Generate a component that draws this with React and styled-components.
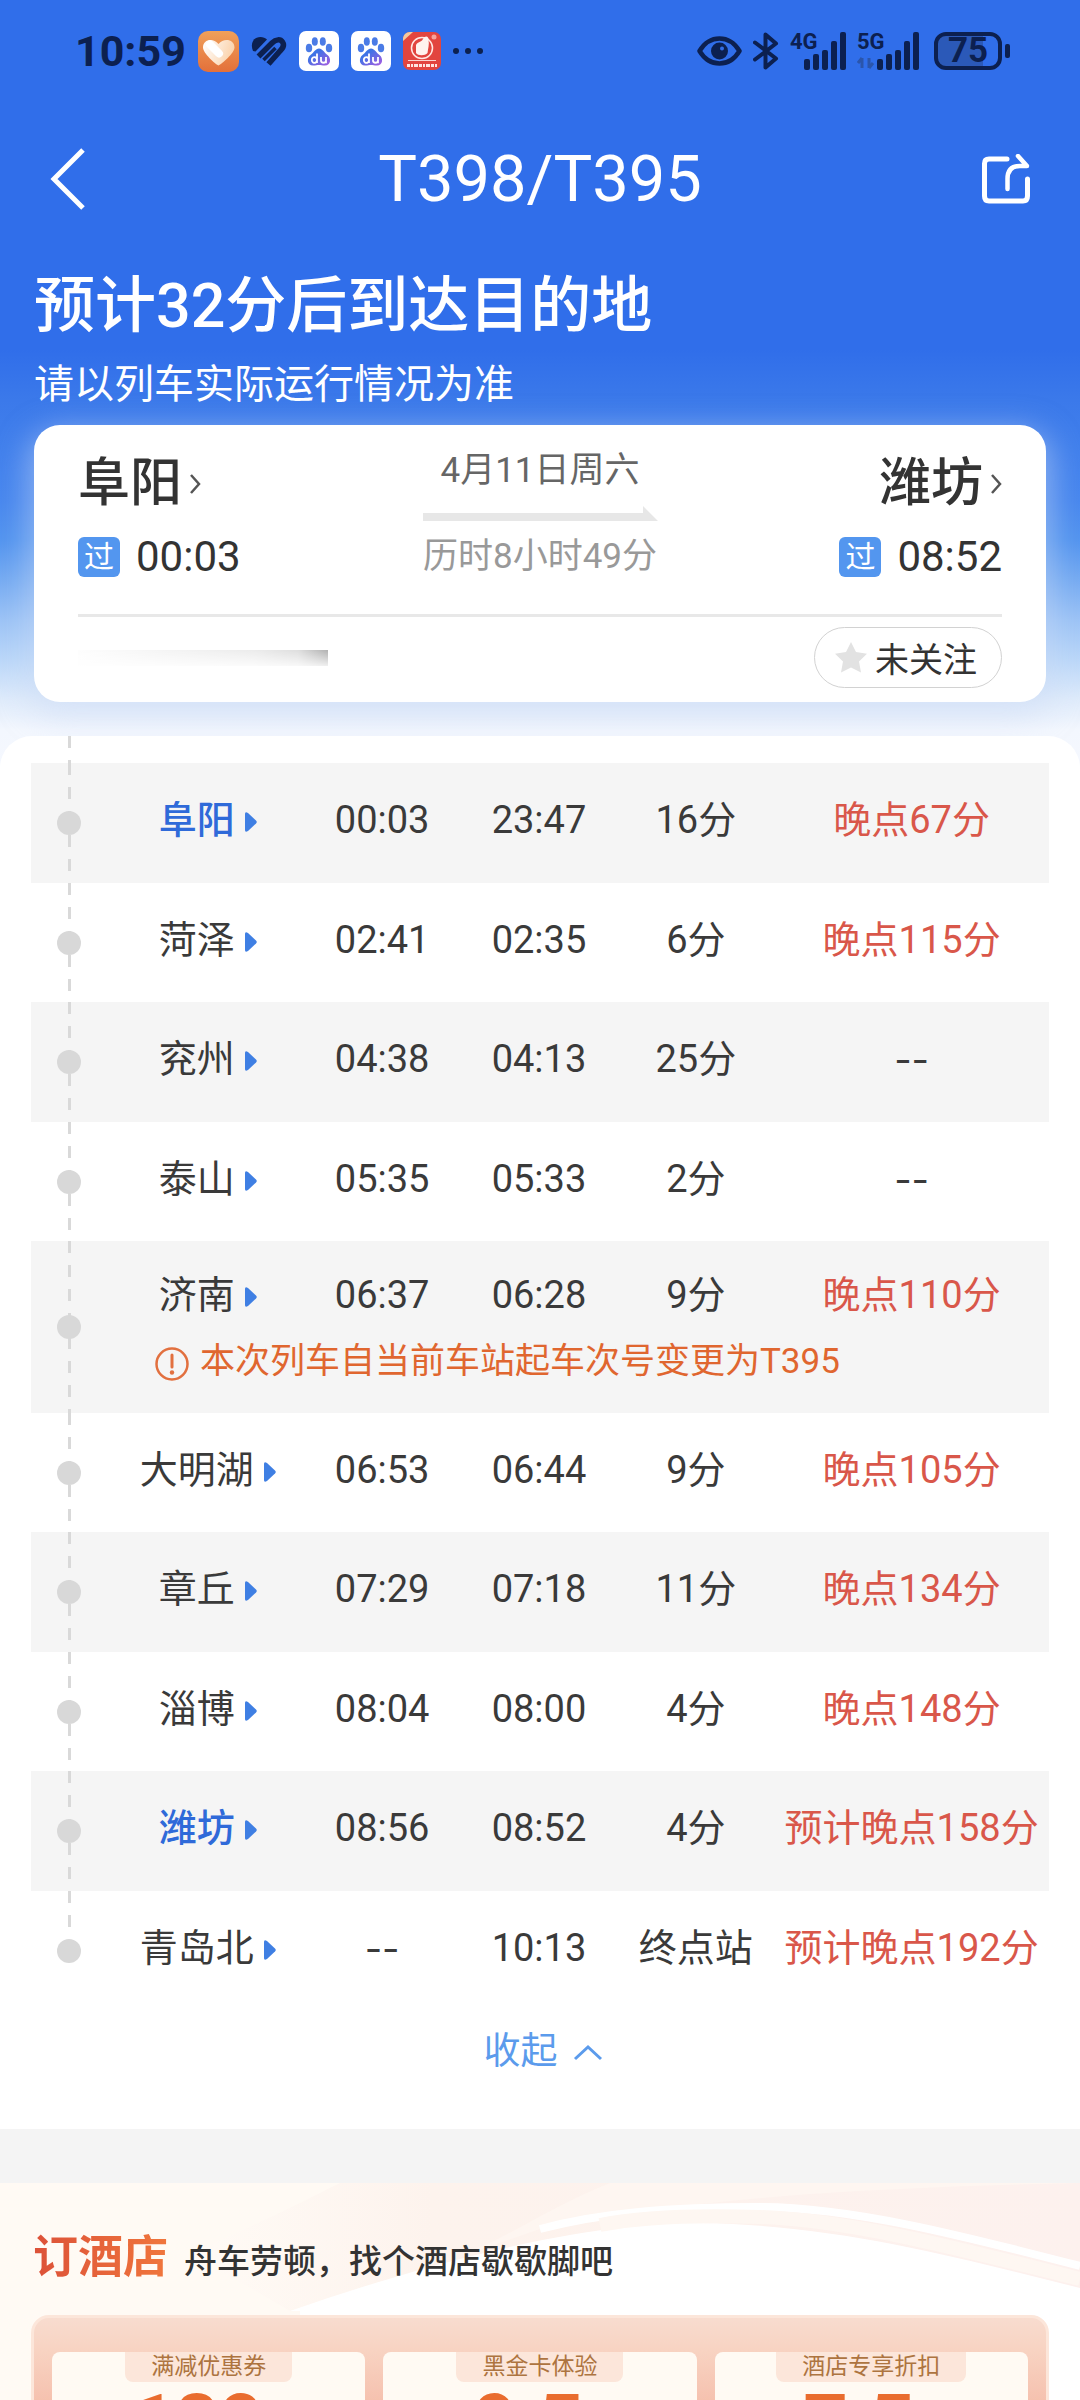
import * as React from 'react';
import styled, { createGlobalStyle, css } from 'styled-components';

const STOPS = [
  { name: '阜阳', arrive: '00:03', depart: '23:47', stay: '16分', delay: '晚点67分', current: true },
  { name: '菏泽', arrive: '02:41', depart: '02:35', stay: '6分', delay: '晚点115分' },
  { name: '兖州', arrive: '04:38', depart: '04:13', stay: '25分' },
  { name: '泰山', arrive: '05:35', depart: '05:33', stay: '2分' },
  {
    name: '济南',
    arrive: '06:37',
    depart: '06:28',
    stay: '9分',
    delay: '晚点110分',
    note: '本次列车自当前车站起车次号变更为T395',
  },
  { name: '大明湖', arrive: '06:53', depart: '06:44', stay: '9分', delay: '晚点105分' },
  { name: '章丘', arrive: '07:29', depart: '07:18', stay: '11分', delay: '晚点134分' },
  { name: '淄博', arrive: '08:04', depart: '08:00', stay: '4分', delay: '晚点148分' },
  { name: '潍坊', arrive: '08:56', depart: '08:52', stay: '4分', delay: '预计晚点158分', current: true },
  { name: '青岛北', depart: '10:13', stay: '终点站', delay: '预计晚点192分' },
];

const COUPONS = [
  { tag: '满减优惠券', value: '180' },
  { tag: '黑金卡体验', value: '9.5' },
  { tag: '酒店专享折扣', value: '7.5' },
];

const INK = '#0c2050';

const HeartAppIcon = () => (
  <svg width="41" height="41" viewBox="0 0 41 41" aria-hidden="true">
    <defs>
      <linearGradient id="heartBg" x1="0" y1="0" x2="0" y2="1">
        <stop offset="0" stopColor="#f0a05a" />
        <stop offset="1" stopColor="#e3703a" />
      </linearGradient>
      <linearGradient id="heartFill" x1="0" y1="0" x2="1" y2="0.3">
        <stop offset="0" stopColor="#ffffff" />
        <stop offset="1" stopColor="#fbd3ac" />
      </linearGradient>
    </defs>
    <rect width="41" height="41" rx="10" fill="url(#heartBg)" />
    <path
      d="M20.500 34.500 C17 33 5 22 5 16.500 C5 8.500 15 6.500 20.500 13 C26 6.500 36.500 8.500 36.500 16.500 C36.500 22 24 33 20.500 34.500z"
      fill="url(#heartFill)"
    />
    <path d="M12 13.500 L21 22.500" stroke="#fff" strokeWidth="8" strokeLinecap="round" />
  </svg>
);

const HandHeartIcon = () => (
  <svg width="36" height="31" viewBox="0 0 36 31" aria-hidden="true">
    <path d="M2 15 C-1 8 2 1 9.500 1 C12 1 14.500 2 16 3.500 L4.500 15.500z" fill={INK} />
    <path
      d="M7.500 20.500 L21 7 C25 3 29.500 3 31.500 6 C33.500 9 31.500 12.500 29.500 14.500 L17.500 28"
      fill="none"
      stroke={INK}
      strokeWidth="5.500"
    />
    <path d="M12.500 24 L24.500 12" fill="none" stroke={INK} strokeWidth="3.500" />
  </svg>
);

const BaiduIcon = () => (
  <svg width="40" height="40" viewBox="0 0 40 40" aria-hidden="true">
    <defs>
      <linearGradient id="paw" x1="0" y1="0" x2="1" y2="1">
        <stop offset="0.300" stopColor="#3d74e6" />
        <stop offset="1" stopColor="#a85be0" />
      </linearGradient>
    </defs>
    <rect width="40" height="40" rx="7" fill="#fff" />
    <ellipse cx="10" cy="17" rx="3.200" ry="4.300" fill="#4a7be6" />
    <ellipse cx="15.800" cy="10.500" rx="3" ry="4.300" fill="#4a7be6" />
    <ellipse cx="23.800" cy="10.500" rx="3" ry="4.300" fill="#4a7be6" />
    <ellipse cx="30" cy="17" rx="3.200" ry="4.300" fill="#4a7be6" />
    <path
      d="M20 17.500 C23.500 17.500 25 21.500 28.500 24 C32.500 27 32 34.500 26 34.500 C23 34.500 22 34 20 34 C18 34 17 34.500 14 34.500 C8 34.500 7.500 27 11.500 24 C15 21.500 16.500 17.500 20 17.500z"
      fill="url(#paw)"
    />
    <path
      d="M18 22.500 V32 M18 28.700 A2.600 2.900 0 1 0 18 29.300 M22 26 V29.500 C22 32.500 27 32.500 27 29.500 M27 26 V32.200"
      fill="none"
      stroke="#fff"
      strokeWidth="1.800"
    />
  </svg>
);

const RedAppIcon = () => (
  <svg width="38" height="38" viewBox="0 0 38 38" aria-hidden="true">
    <rect width="38" height="38" rx="7" fill="#e2453f" />
    <path d="M0 9 V7 C0 3 3 0 7 0 H10z" fill="#f3c9a0" />
    <circle cx="31" cy="5" r="2.500" fill="#f5a49c" />
    <circle cx="19" cy="16" r="10.500" fill="none" stroke="#ffe9e4" strokeWidth="1.500" />
    <path d="M13 13 C15 9 18 11 20 7 C22 3 26 4 25.500 8 C26.500 12 25 17 24.500 21 C22 24 15 24 13 21z" fill="#fff3ee" />
    <path d="M5 28.500 H33" stroke="#fbd5cf" />
    <path d="M4 33.500 H35" stroke="#ffe4df" strokeWidth="3" strokeDasharray="3 1 2 1 4 1" />
  </svg>
);

const MoreIcon = () => (
  <svg width="30" height="6" viewBox="0 0 30 6" fill={INK} aria-hidden="true">
    <circle cx="3" cy="3" r="3" />
    <circle cx="15" cy="3" r="3" />
    <circle cx="27" cy="3" r="3" />
  </svg>
);

const EyeIcon = () => (
  <svg width="45" height="30" viewBox="0 0 45 30" aria-hidden="true">
    <path
      d="M2.500 15 C8 6 15 2.500 22.500 2.500 C30 2.500 37 6 42.500 15 C37 24 30 27.500 22.500 27.500 C15 27.500 8 24 2.500 15z"
      fill="none"
      stroke={INK}
      strokeWidth="4.500"
      strokeLinejoin="round"
    />
    <circle cx="22.500" cy="15" r="8.500" fill={INK} />
    <circle cx="25" cy="12.500" r="2" fill="#326de6" />
  </svg>
);

const BluetoothIcon = () => (
  <svg width="26" height="38" viewBox="0 0 26 38" aria-hidden="true">
    <path
      d="M2 10.500 L23 26.500 L12.500 35.500 V2.500 L23 11.500 L2 27.500"
      fill="none"
      stroke={INK}
      strokeWidth="4"
      strokeLinejoin="round"
      strokeLinecap="round"
    />
  </svg>
);

const BARS = [
  [0, 27, 11],
  [9, 22, 16],
  [18, 18, 20],
  [27, 9, 29],
  [36, 0, 38],
];

const Signal = ({ label, active }) => {
  const left = active ? 20 : 14;
  const width = left + 42;
  return (
    <SignalIcon width={width} height="44" viewBox={`0 -6 ${width} 44`} role="img" aria-label={label}>
      <SignalText x="0" y="17">
        {label}
      </SignalText>
      {active && (
        <path d="M5 26 V36 M5 26 L1 31 M12 26 V36 M12 36 L16 31" stroke="#2a55ac" strokeWidth="3" fill="none" />
      )}
      {BARS.map(([x, y, height]) => (
        <rect key={x} x={x + left} y={y} width="6" height={height} rx="2" fill={INK} />
      ))}
    </SignalIcon>
  );
};

const Chevron = () => (
  <svg width="11" height="20" viewBox="0 0 11 20" aria-hidden="true">
    <path d="M1 1 L9 10 L1 19" fill="none" stroke="#555" strokeWidth="2.500" />
  </svg>
);

const Endpoint = ({ name, time, align }) => (
  <EndpointBox $align={align}>
    <StationLink href="#station">
      {name}
      <Chevron />
    </StationLink>
    <PassTime>
      <PassBadge>过</PassBadge>
      {time}
    </PassTime>
  </EndpointBox>
);

const StopRows = ({ stop, striped, last }) => (
  <>
    <StopRow $striped={striped} $noted={!!stop.note}>
      <TrackCell rowSpan={stop.note ? 2 : 1} $last={last}>
        <Dot />
      </TrackCell>
      <StopCell>
        <StopName href="#stop" $current={stop.current}>
          {stop.name}
          <svg width="12" height="20" viewBox="0 0 12 20" aria-hidden="true">
            <path d="M0 2 Q0 -1 3 1 L11 8.500 Q12.500 10 11 11.500 L3 19 Q0 21 0 18z" fill="#3f7fe3" />
          </svg>
        </StopName>
      </StopCell>
      <StopCell $empty={!stop.arrive}>{stop.arrive || '--'}</StopCell>
      <StopCell>{stop.depart}</StopCell>
      <StopCell>{stop.stay}</StopCell>
      <StopCell $late={!!stop.delay} $empty={!stop.delay}>
        {stop.delay || '--'}
      </StopCell>
    </StopRow>
    {stop.note && (
      <NoteRow>
        <td colSpan={5}>
          <Note>
            <svg width="34" height="34" viewBox="0 0 34 34" aria-hidden="true">
              <circle cx="17" cy="17" r="15.500" fill="none" stroke="#e2703f" strokeWidth="2.500" />
              <path d="M17 8 V20" stroke="#e2703f" strokeWidth="3" strokeLinecap="round" />
              <circle cx="17" cy="25.500" r="2.200" fill="#e2703f" />
            </svg>
            {stop.note}
          </Note>
        </td>
      </NoteRow>
    )}
  </>
);

const HotelArt = () => (
  <Art viewBox="0 0 1080 217" preserveAspectRatio="none" aria-hidden="true">
    <defs>
      <linearGradient id="sweep" x1="0" y1="0" x2="1" y2="0">
        <stop offset="0.200" stopColor="#fffaf5" />
        <stop offset="0.400" stopColor="#fdf3ed" />
        <stop offset="1" stopColor="#fdf1ee" />
      </linearGradient>
    </defs>
    <path d="M0 0 H1080 V217 H0z" fill="url(#sweep)" />
    <path d="M470 70 C520 46 560 20 610 0 H1080 C900 4 700 12 540 46z" fill="#fef6f1" />
    <path d="M290 128 C450 72 600 38 700 40 C840 42 960 75 1080 105 V217 H290z" fill="#fff" />
    <path d="M540 46 C600 30 670 24 760 24 C850 24 960 52 1080 83" fill="none" stroke="#fff" strokeWidth="8" />
    <path d="M600 42 C640 34 700 32 760 34 C850 37 960 66 1080 96" fill="none" stroke="#fef7f2" strokeWidth="14" />
    <path d="M0 0 H340 C290 25 250 45 190 70 L290 128 H300 V217 H0z" fill="#fffaf4" />
  </Art>
);

const App = () => (
  <Screen>
    <GlobalStyle />
    <StatusBar>
      <StatusGroup>
        <Clock>10:59</Clock>
        <HeartAppIcon />
        <HandHeartIcon />
        <BaiduIcon />
        <BaiduIcon />
        <RedAppIcon />
        <MoreIcon />
      </StatusGroup>
      <StatusGroup $tight>
        <EyeIcon />
        <BluetoothIcon />
        <Signal label="4G" />
        <Signal label="5G" active />
        <Battery>75</Battery>
      </StatusGroup>
    </StatusBar>

    <NavBar>
      <IconButton aria-label="返回">
        <svg width="36" height="62" viewBox="0 0 36 62" aria-hidden="true">
          <path d="M33 2 L4 31 L33 60" fill="none" stroke="#fff" strokeWidth="5" />
        </svg>
      </IconButton>
      <TrainNo>T398/T395</TrainNo>
      <IconButton aria-label="分享">
        <svg width="48" height="50" viewBox="0 0 48 50" aria-hidden="true">
          <path
            d="M25 5 H7 Q2.500 5 2.500 9.500 V42 Q2.500 47 7 47 H41 Q45.500 47 45.500 42 V25"
            fill="none"
            stroke="#fff"
            strokeWidth="5"
            strokeLinecap="round"
          />
          <path
            d="M25.500 35 V25 Q25.500 12 38 12 H45 L36 2"
            fill="none"
            stroke="#fff"
            strokeWidth="4.500"
            strokeLinecap="round"
            strokeLinejoin="round"
          />
        </svg>
      </IconButton>
    </NavBar>

    <Summary>
      <Headline>预计32分后到达目的地</Headline>
      <Hint>请以列车实际运行情况为准</Hint>
    </Summary>

    <TripCard>
      <TripRoute>
        <Endpoint name="阜阳" time="00:03" align="flex-start" />
        <TripMiddle>
          <TripDate>4月11日周六</TripDate>
          <svg width="235" height="15" viewBox="0 0 235 15" aria-hidden="true">
            <path d="M0 7 H220 V0 L235 15 H0z" fill="#e7e7e7" />
          </svg>
          <Duration>历时8小时49分</Duration>
        </TripMiddle>
        <Endpoint name="潍坊" time="08:52" align="flex-end" />
      </TripRoute>
      <TripFooter>
        <Redacted />
        <FollowButton>
          <svg width="32" height="31" viewBox="0 0 32 31" aria-hidden="true">
            <path
              d="M16 0 L21 10 L32 11.700 L24 19.500 L26 30.500 L16 25.500 L6 30.500 L8 19.500 L0 11.700 L11 10z"
              fill="#e2e2e2"
            />
          </svg>
          未关注
        </FollowButton>
      </TripFooter>
    </TripCard>

    <StopsPanel>
      <StopsTable>
        <colgroup>
          <Col $share={81} />
          <Col $share={192} />
          <Col $share={157} />
          <Col $share={157} />
          <Col $share={157} />
          <Col $share={275} />
        </colgroup>
        <tbody>
          <LeadRow>
            <TrackCell />
            <td colSpan={5} />
          </LeadRow>
          {STOPS.map((stop, i) => (
            <StopRows key={stop.name} stop={stop} striped={i % 2 === 0} last={i === STOPS.length - 1} />
          ))}
        </tbody>
      </StopsTable>
      <CollapseButton>
        收起
        <svg width="30" height="17" viewBox="0 0 30 17" aria-hidden="true">
          <path d="M2 15 L15 3 L28 15" fill="none" stroke="#5b9bec" strokeWidth="3" />
        </svg>
      </CollapseButton>
    </StopsPanel>

    <Hotel>
      <HotelArt />
      <HotelHead>
        <HotelTitle>订酒店</HotelTitle>
        <HotelSlogan>舟车劳顿，找个酒店歇歇脚吧</HotelSlogan>
      </HotelHead>
      <Coupons>
        {COUPONS.map(({ tag, value }) => (
          <Coupon key={tag}>
            <CouponTag>{tag}</CouponTag>
            <CouponValue>{value}</CouponValue>
          </Coupon>
        ))}
      </Coupons>
    </Hotel>
  </Screen>
);

const GlobalStyle = createGlobalStyle`
  * {
    box-sizing: border-box;
  }
  body {
    margin: 0;
    background: #fff;
    color: #333;
    font-family: Roboto, 'Noto Sans CJK SC', sans-serif;
  }
  h1, h2, p {
    margin: 0;
  }
  button {
    border: 0;
    padding: 0;
    background: none;
    color: inherit;
    font: inherit;
    cursor: pointer;
  }
  a {
    color: inherit;
    text-decoration: none;
  }
  svg {
    flex: none;
  }
`;

const Screen = styled.div`
  height: 100vh;
  overflow: hidden auto;
  scrollbar-width: none;
  background: linear-gradient(
      #306eea 350px,
      #3b79ea 400px,
      #4887ee 500px,
      #5394ef 540px,
      #76abf2 580px,
      #9cc3f6 620px,
      #bbd7f9 660px,
      #dfebfb 700px,
      #f3f7fe 730px,
      #f6f8fe 780px
    )
    no-repeat 0 0 / 100% 780px;
`;

const StatusBar = styled.div`
  display: flex;
  align-items: center;
  justify-content: space-between;
  height: 102px;
  padding: 0 70px 0 75px;
  color: ${INK};
`;

const StatusGroup = styled.div`
  display: flex;
  align-items: center;
  gap: ${({ $tight }) => ($tight ? 11 : 12)}px;
`;

const Clock = styled.span`
  font-size: 43px;
  font-weight: 700;
  line-height: 48px;
`;

const SignalIcon = styled.svg`
  margin-bottom: 6px;
`;

const SignalText = styled.text`
  fill: ${INK};
  font-size: 22px;
  font-weight: 700;
`;

const Battery = styled.span`
  position: relative;
  width: 68px;
  height: 38px;
  margin: 0 8px 0 4px;
  border: 4px solid ${INK};
  border-radius: 12px;
  background: linear-gradient(90deg, #2b59b8 75%, transparent 75%);
  font-size: 35px;
  font-weight: 700;
  line-height: 30px;
  text-align: center;

  &::after {
    content: '';
    position: absolute;
    top: 8px;
    right: -12px;
    width: 5px;
    height: 14px;
    border-radius: 2px;
    background: ${INK};
  }
`;

const NavBar = styled.header`
  display: flex;
  align-items: center;
  justify-content: space-between;
  height: 154px;
  padding: 0 50px;
  color: #fff;
`;

const IconButton = styled.button`
  display: flex;
  min-width: 48px;
`;

const TrainNo = styled.h1`
  font-size: 65px;
  font-weight: 400;
  line-height: 80px;
`;

const Summary = styled.section`
  padding: 8px 34px 15px;
  color: #fff;
`;

const Headline = styled.h2`
  font-size: 61px;
  font-weight: 500;
  line-height: 84px;
`;

const Hint = styled.p`
  margin-top: 12px;
  font-size: 40px;
  line-height: 50px;
`;

const TripCard = styled.section`
  margin: 0 34px;
  padding: 24px 44px 14px;
  border-radius: 26px;
  background: #fff;
  box-shadow: 0 10px 30px 6px rgba(205, 220, 245, 0.5);
`;

const TripRoute = styled.div`
  display: grid;
  grid-template-columns: 1fr auto 1fr;
  align-items: center;
  padding-bottom: 36px;
  border-bottom: 3px solid #e8e8e8;
`;

const EndpointBox = styled.div`
  display: flex;
  flex-direction: column;
  align-items: ${({ $align }) => $align};
  gap: 20px;
`;

const StationLink = styled.a`
  display: flex;
  align-items: center;
  gap: 8px;
  font-size: 52px;
  font-weight: 500;
  line-height: 66px;
`;

const PassTime = styled.div`
  display: flex;
  align-items: center;
  gap: 16px;
  font-size: 42px;
  line-height: 40px;
`;

const PassBadge = styled.span`
  width: 42px;
  height: 40px;
  border-radius: 6px;
  background: #5396ef;
  color: #fff;
  font-size: 30px;
  text-align: center;
`;

const TripMiddle = styled.div`
  display: flex;
  flex-direction: column;
  align-items: center;
  gap: 14px;
  font-size: 35px;
  line-height: 43px;
`;

const TripDate = styled.span`
  color: #666;
`;

const Duration = styled.span`
  color: #999;
`;

const TripFooter = styled.div`
  display: flex;
  align-items: center;
  justify-content: space-between;
  padding-top: 10px;
`;

const Redacted = styled.span`
  width: 250px;
  height: 16px;
  background: linear-gradient(90deg, #fdfdfd, #ececec 70%, #dedede 88%, #b0b0b0);
  mask-image: linear-gradient(#000, rgba(0, 0, 0, 0.2));
`;

const FollowButton = styled.button`
  display: flex;
  align-items: center;
  gap: 8px;
  height: 61px;
  padding: 0 24px 0 20px;
  border: 1px solid #d2d2d2;
  border-radius: 31px;
  font-size: 34px;
`;

const StopsPanel = styled.section`
  margin-top: 34px;
  padding: 0 31px;
  border-radius: 32px 32px 0 0;
  background: #fff;
`;

const StopsTable = styled.table`
  width: 100%;
  border-spacing: 0;
  table-layout: fixed;
  font-size: 38px;
  line-height: 52px;

  td {
    padding: 0;
  }
`;

const Col = styled.col`
  width: ${({ $share }) => ($share / 1019) * 100}%;
`;

const LeadRow = styled.tr`
  height: 27px;
`;

const StopCell = styled.td`
  vertical-align: top;
  text-align: center;
  white-space: nowrap;
  color: ${({ $late }) => ($late ? '#d9574a' : '#3a3a3a')};

  && {
    padding-top: 31px;
  }

  ${({ $empty }) =>
    $empty &&
    css`
      font-family: Inter, sans-serif;
    `}
`;

const StopRow = styled.tr`
  height: ${({ $noted, $striped }) => ($noted ? 92 : $striped ? 120 : 119)}px;
  background: ${({ $striped }) => ($striped ? '#f5f5f5' : '#fff')};

  ${({ $noted }) =>
    $noted &&
    css`
      && ${StopCell} {
        padding-top: 28px;
      }
    `}
`;

const TrackCell = styled.td`
  vertical-align: middle;
  background: linear-gradient(#d9d9d9 12px, transparent 12px) 37px 0 / 3px 24px repeat-y;

  ${({ $last }) =>
    $last &&
    css`
      background-repeat: no-repeat;
      background-size: 3px 36px;
      background-image: linear-gradient(#d9d9d9 12px, transparent 12px 24px, #d9d9d9 24px);
    `}
`;

const Dot = styled.span`
  display: block;
  width: 24px;
  height: 24px;
  margin-left: 26px;
  border-radius: 50%;
  background: #d8d8d8;
`;

const StopName = styled.a`
  display: inline-flex;
  align-items: center;
  gap: 10px;
  color: ${({ $current }) => ($current ? '#2f6ad9' : 'inherit')};
  font-weight: ${({ $current }) => ($current ? 500 : 400)};

  svg {
    margin-top: 4px;
  }
`;

const NoteRow = styled.tr`
  height: 80px;
  background: #f5f5f5;
  vertical-align: top;
`;

const Note = styled.div`
  display: flex;
  align-items: center;
  gap: 11px;
  padding: 3px 0 0 43px;
  color: #e0662f;
  font-size: 35px;
  white-space: nowrap;

  svg {
    margin-top: 4px;
  }
`;

const CollapseButton = styled.button`
  display: flex;
  align-items: center;
  justify-content: center;
  gap: 15px;
  width: 100%;
  padding: 21px 0 56px 6px;
  color: #5b9bec;
  font-size: 37px;
  line-height: 42px;
`;

const Hotel = styled.section`
  position: relative;
  padding: 40px 31px;
  border-top: 54px solid #f4f4f4;
  background: #fffaf4;
`;

const Art = styled.svg`
  position: absolute;
  top: 0;
  left: 0;
  width: 100%;
  height: 217px;
`;

const HotelHead = styled.div`
  position: relative;
  display: flex;
  align-items: baseline;
  gap: 16px;
  padding-left: 2px;
`;

const HotelTitle = styled.h2`
  background: linear-gradient(90deg, #dc5138, #f0763c);
  background-clip: text;
  color: transparent;
  font-size: 45px;
  font-weight: 700;
  line-height: 70px;
`;

const HotelSlogan = styled.span`
  font-size: 33px;
  font-weight: 500;
`;

const Coupons = styled.div`
  position: relative;
  display: grid;
  grid-template-columns: repeat(3, 1fr);
  gap: 18px;
  margin-top: 22px;
  padding: 34px 18px;
  border: 3px solid #fce6da;
  border-radius: 18px;
  background: linear-gradient(#f8dccf, #f8d3c2 32px, #f5bfac 90px);
`;

const Coupon = styled.div`
  display: flex;
  flex-direction: column;
  align-items: center;
  border-radius: 8px;
  background: #fffaf3;
`;

const CouponTag = styled.span`
  padding: 0 26px;
  border-radius: 0 0 8px 8px;
  background: #fce6da;
  color: #ad7440;
  font-size: 23px;
  line-height: 30px;
`;

const CouponValue = styled.strong`
  padding-right: 24px;
  color: #e96c2e;
  font-size: 76px;
  font-weight: 900;
  line-height: 80px;
`;

export default App;
